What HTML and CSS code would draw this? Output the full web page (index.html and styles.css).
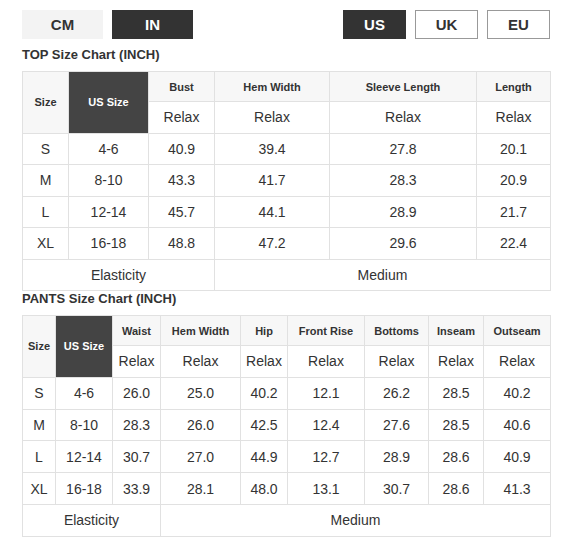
FILE: index.html
```html
<!DOCTYPE html>
<html lang="en">
<head>
    <meta charset="UTF-8">
    <meta name="viewport" content="width=device-width, initial-scale=1.0">
    <title>Size Chart</title>
    <link rel="stylesheet" href="styles.css">
</head>
<body>

    <div class="container">
        <div class="toolbar">
            <div class="unit-switch">
                <span class="btn unit">CM</span>
                <span class="btn unit active">IN</span>
            </div>
            <div class="region-switch">
                <span class="btn region active">US</span>
                <span class="btn region">UK</span>
                <span class="btn region">EU</span>
            </div>
        </div>

        <h2 class="chart-title">TOP Size Chart (INCH)</h2>
        <table class="size-table top-table">
            <colgroup>
                <col class="c-46"><col class="c-80"><col class="c-66"><col class="c-115"><col class="c-147"><col class="c-74">
            </colgroup>
            <tr class="head">
                <th rowspan="2" class="size-head">Size</th>
                <th rowspan="2" class="us-head">US Size</th>
                <th>Bust</th>
                <th>Hem Width</th>
                <th>Sleeve Length</th>
                <th>Length</th>
            </tr>
            <tr>
                <td>Relax</td><td>Relax</td><td>Relax</td><td>Relax</td>
            </tr>
            <tr><td>S</td><td>4-6</td><td>40.9</td><td>39.4</td><td>27.8</td><td>20.1</td></tr>
            <tr><td>M</td><td>8-10</td><td>43.3</td><td>41.7</td><td>28.3</td><td>20.9</td></tr>
            <tr><td>L</td><td>12-14</td><td>45.7</td><td>44.1</td><td>28.9</td><td>21.7</td></tr>
            <tr><td>XL</td><td>16-18</td><td>48.8</td><td>47.2</td><td>29.6</td><td>22.4</td></tr>
            <tr><td colspan="3">Elasticity</td><td colspan="3">Medium</td></tr>
        </table>

        <h2 class="chart-title">PANTS Size Chart (INCH)</h2>
        <table class="size-table pants-table">
            <colgroup>
                <col class="c-33"><col class="c-57"><col class="c-48"><col class="c-80"><col class="c-47"><col class="c-77"><col class="c-64"><col class="c-55"><col class="c-67">
            </colgroup>
            <tr class="head">
                <th rowspan="2" class="size-head">Size</th>
                <th rowspan="2" class="us-head">US Size</th>
                <th>Waist</th>
                <th>Hem Width</th>
                <th>Hip</th>
                <th>Front Rise</th>
                <th>Bottoms</th>
                <th>Inseam</th>
                <th>Outseam</th>
            </tr>
            <tr>
                <td>Relax</td><td>Relax</td><td>Relax</td><td>Relax</td><td>Relax</td><td>Relax</td><td>Relax</td>
            </tr>
            <tr><td>S</td><td>4-6</td><td>26.0</td><td>25.0</td><td>40.2</td><td>12.1</td><td>26.2</td><td>28.5</td><td>40.2</td></tr>
            <tr><td>M</td><td>8-10</td><td>28.3</td><td>26.0</td><td>42.5</td><td>12.4</td><td>27.6</td><td>28.5</td><td>40.6</td></tr>
            <tr><td>L</td><td>12-14</td><td>30.7</td><td>27.0</td><td>44.9</td><td>12.7</td><td>28.9</td><td>28.6</td><td>40.9</td></tr>
            <tr><td>XL</td><td>16-18</td><td>33.9</td><td>28.1</td><td>48.0</td><td>13.1</td><td>30.7</td><td>28.6</td><td>41.3</td></tr>
            <tr><td colspan="3">Elasticity</td><td colspan="6">Medium</td></tr>
        </table>
    </div>

</body>
</html>
```

FILE: styles.css
```css
body {
    font-family: "Liberation Sans", Arial, sans-serif;
    margin: 0;
    padding: 0;
    background-color: #fff;
    color: #333;
}

.container {
    width: 528px;
    padding: 10px 0 0 22px;
}

.toolbar {
    display: flex;
    justify-content: space-between;
    align-items: center;
}

.unit-switch,
.region-switch {
    display: flex;
    gap: 9px;
}

.btn {
    display: flex;
    align-items: center;
    justify-content: center;
    box-sizing: border-box;
    height: 29px;
    font-size: 15px;
    font-weight: bold;
    color: #333;
}

.btn.unit {
    width: 81px;
    background-color: #f3f3f3;
}

.btn.region {
    width: 63px;
    border: 1px solid #999;
}

.btn.active {
    background-color: #333;
    color: #fff;
    border-color: #333;
}

.chart-title {
    font-size: 13px;
    font-weight: bold;
    line-height: 16px;
    margin: 8px 0 8px;
}

.size-table + .chart-title {
    margin-top: 0;
}

.size-table {
    width: 528px;
    table-layout: fixed;
    border-collapse: collapse;
    text-align: center;
}

.size-table th,
.size-table td {
    border: 1px solid #e1e1e1;
    padding: 0;
    font-size: 14px;
    height: 30.5px;
}

.size-table th {
    font-size: 11px;
    font-weight: bold;
    background-color: #f7f7f7;
    height: 29px;
}

.size-table .us-head {
    background-color: #444;
    color: #fff;
}

.pants-table td {
    height: 30.8px;
}

.c-33 { width: 33px; }
.c-46 { width: 46px; }
.c-47 { width: 47px; }
.c-48 { width: 48px; }
.c-55 { width: 55px; }
.c-57 { width: 57px; }
.c-64 { width: 64px; }
.c-66 { width: 66px; }
.c-67 { width: 67px; }
.c-74 { width: 74px; }
.c-77 { width: 77px; }
.c-80 { width: 80px; }
.c-115 { width: 115px; }
.c-147 { width: 147px; }
```
